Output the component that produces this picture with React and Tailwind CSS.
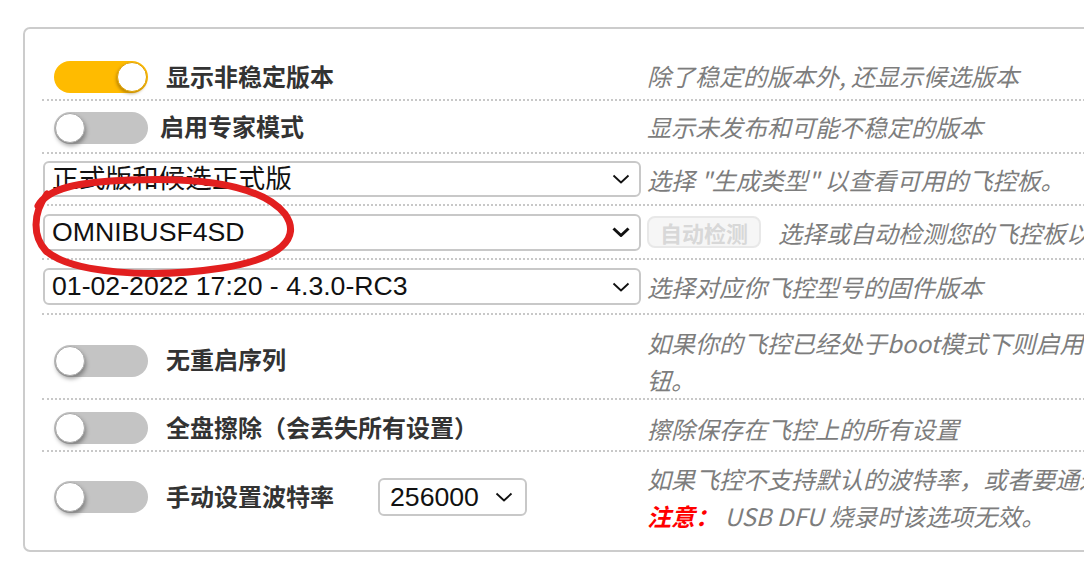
import React from "react";

const DESC = "text-[24px] italic text-[#7d7d7d] whitespace-nowrap leading-[37px]";
const LABEL = "text-[24px] font-bold text-[#333333] whitespace-nowrap -mt-[3px]";
const ROW = "flex items-center border-b-2 border-dotted border-[#c8c8c8]";

const Toggle = ({ on }) => (
  <div
    className={`relative h-[32px] w-[94px] shrink-0 rounded-full ${
      on ? "bg-[#ffbb00]" : "bg-[#c4c4c4]"
    }`}
  >
    <div
      className={`absolute top-[1px] h-[30px] w-[30px] rounded-full bg-white ${
        on
          ? "right-[1px] border border-[#e0a200] shadow-[-1px_2px_3px_rgba(120,80,0,0.45)]"
          : "left-[1px] border border-[#a9a9a9] shadow-[1px_3px_4px_rgba(0,0,0,0.35)]"
      }`}
    />
  </div>
);

const Chevron = ({ bold }) => (
  <svg width="18" height="10" viewBox="0 0 18 10" className="shrink-0">
    <polyline
      points="1.5,1.5 9,8.5 16.5,1.5"
      fill="none"
      stroke="#111"
      strokeWidth={bold ? 3 : 1.8}
      strokeLinejoin="round"
    />
  </svg>
);

const Select = ({ value, bold, className = "" }) => (
  <div
    className={`flex items-center justify-between rounded-[6px] border-2 border-[#c8c8c8] bg-white font-['Liberation_Sans','Noto_Sans_CJK_SC',sans-serif] text-[26.67px] text-[#111] ${className}`}
  >
    <span className="whitespace-nowrap leading-none">{value}</span>
    <Chevron bold={bold} />
  </div>
);

const ToggleLabel = ({ on, label, labelGap = "ml-[18px]" }) => (
  <div className="flex w-[604px] shrink-0 items-center pl-[12px]">
    <Toggle on={on} />
    <span className={`${LABEL} ${labelGap}`}>{label}</span>
  </div>
);

export default function App() {
  return (
    <div className="relative h-[564px] w-[1084px] overflow-hidden bg-white font-['Noto_Sans_CJK_SC',sans-serif]">
      <div className="ml-[23px] mt-[27px] w-[1200px] rounded-[7px] border-2 border-[#cccccc] pl-[17px] pt-[26px] pb-[8px]">
        {/* row 1 */}
        <div className={`${ROW} h-[46px]`}>
          <ToggleLabel on label="显示非稳定版本" />
          <div className={`${DESC} ml-[1px] -mt-[3px]`}>除了稳定的版本外, 还显示候选版本</div>
        </div>

        {/* row 2 */}
        <div className={`${ROW} h-[53px] pt-[2px]`}>
          <ToggleLabel label="启用专家模式" labelGap="ml-[12px]" />
          <div className={`${DESC} ml-[1px] -mt-[3px]`}>显示未发布和可能不稳定的版本</div>
        </div>

        {/* row 3 */}
        <div className={`${ROW} h-[52px]`}>
          <div className="w-[604px] shrink-0 pl-[1px]">
            <Select value="正式版和候选正式版" className="h-[36px] w-[598px] pl-[7px] pr-[9px]" />
          </div>
          <div className={`${DESC} ml-[1px]`}>选择 "生成类型" 以查看可用的飞控板。</div>
        </div>

        {/* row 4 */}
        <div className={`${ROW} h-[54px]`}>
          <div className="w-[604px] shrink-0 pl-[1px]">
            <Select value="OMNIBUSF4SD" bold className="h-[37px] w-[598px] pl-[7px] pr-[9px]" />
          </div>
          <div className="ml-[1px] flex h-[32px] w-[114px] shrink-0 items-center justify-center rounded-[8px] border-2 border-[#e8e8e8] bg-[#f6f6f6] text-[22px] font-bold text-[#d8d8d8]">
            自动检测
          </div>
          <div className={`${DESC} ml-[17px]`}>选择或自动检测您的飞控板以查看可用的固件。</div>
        </div>

        {/* row 5 */}
        <div className={`${ROW} h-[55px]`}>
          <div className="w-[604px] shrink-0 pl-[1px]">
            <Select value="01-02-2022 17:20 - 4.3.0-RC3" className="h-[37px] w-[598px] pl-[7px] pr-[9px]" />
          </div>
          <div className={`${DESC} ml-[1px]`}>选择对应你飞控型号的固件版本</div>
        </div>

        {/* row 6 */}
        <div className={`${ROW} h-[85px] pt-[8px]`}>
          <ToggleLabel label="无重启序列" />
          <div className="ml-[1px]">
            <div className={DESC}>如果你的飞控已经处于boot模式下则启用此按</div>
            <div className={DESC}>钮。</div>
          </div>
        </div>

        {/* row 7 */}
        <div className={`${ROW} h-[52px] pt-[6px]`}>
          <ToggleLabel label="全盘擦除（会丢失所有设置）" />
          <div className={`${DESC} ml-[1px]`}>擦除保存在飞控上的所有设置</div>
        </div>

        {/* row 8 */}
        <div className="flex h-[90px] items-center">
          <div className="flex w-[604px] shrink-0 items-center pl-[12px]">
            <Toggle />
            <span className={`${LABEL} ml-[18px]`}>手动设置波特率</span>
            <Select value="256000" className="ml-[44px] h-[38px] w-[149px] pl-[10px] pr-[12px]" />
          </div>
          <div className="ml-[1px]">
            <div className={DESC}>如果飞控不支持默认的波特率，或者要通过蓝牙烧录，请启用此选项。</div>
            <div className={DESC}>
              <span className="font-bold text-[#ff0000]">注意：</span> USB DFU 烧录时该选项无效。
            </div>
          </div>
        </div>
      </div>

      {/* red hand-drawn annotation */}
      <svg className="pointer-events-none absolute left-0 top-0" width="1084" height="564">
        <path
          d="M 38 206 C 48 188, 78 182, 130 180 C 204 177, 262 186, 285 214 C 302 238, 280 259, 222 268 C 150 279, 72 273, 46 251 C 33 237, 32 214, 47 194"
          fill="none"
          stroke="#e21f1f"
          strokeWidth="7"
          strokeLinecap="round"
        />
      </svg>
    </div>
  );
}
